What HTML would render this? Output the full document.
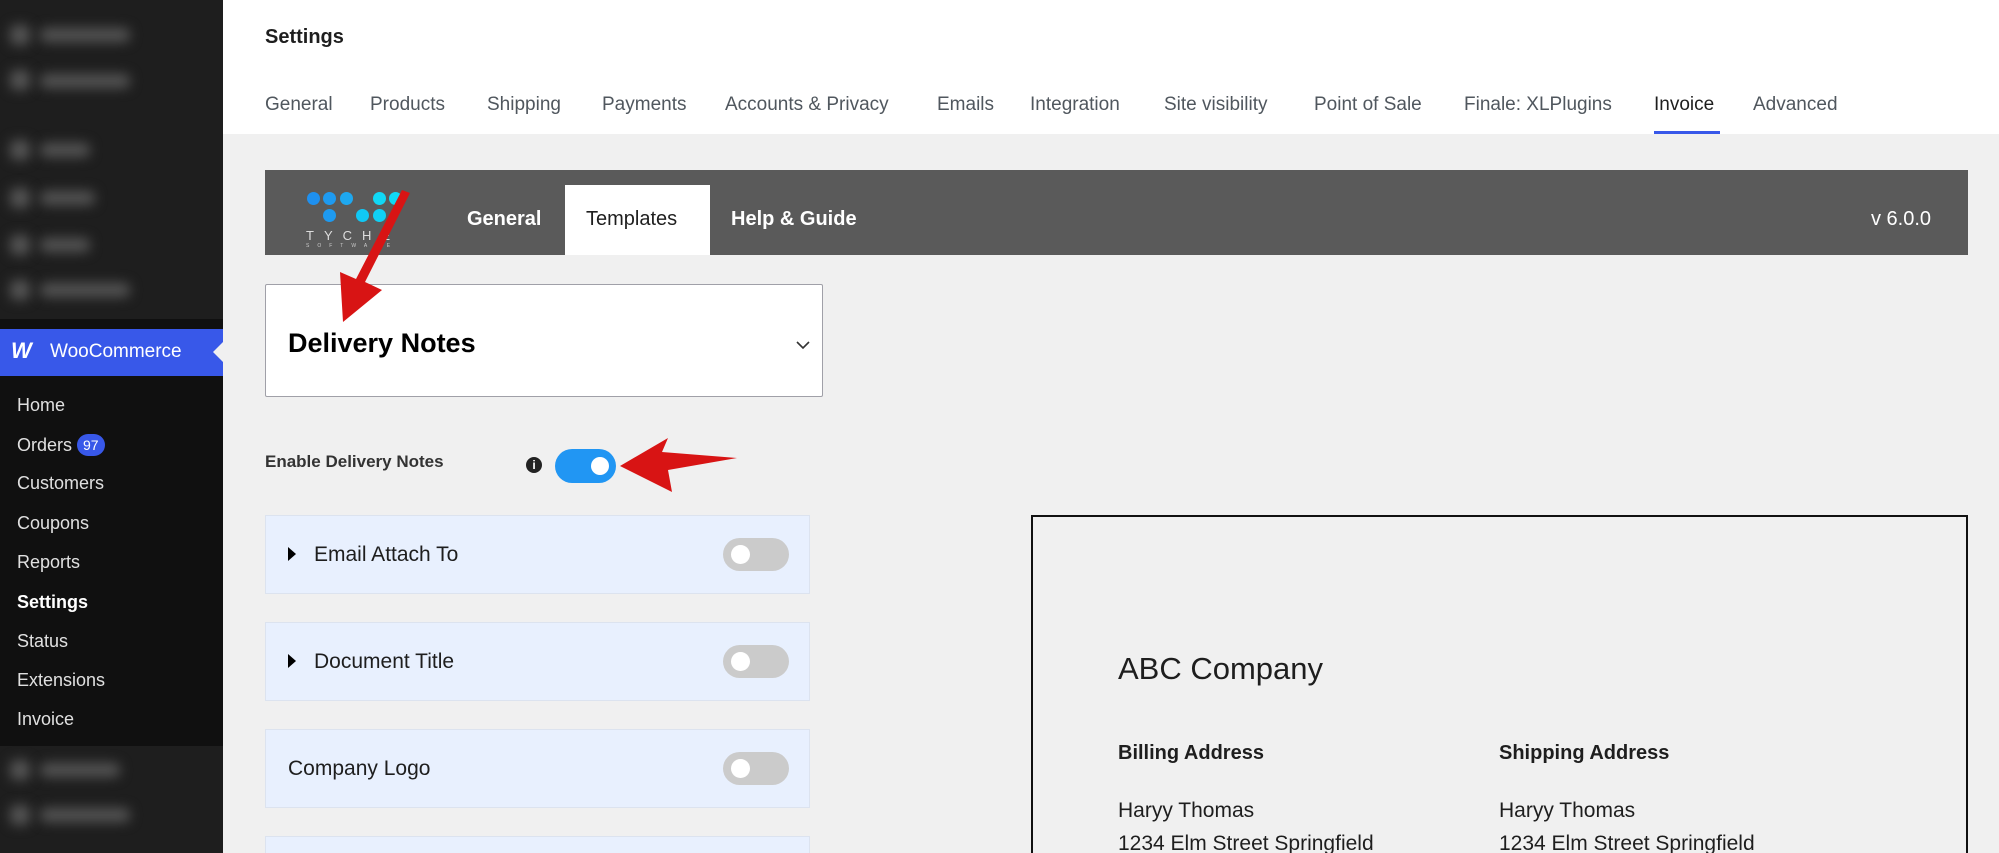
<!DOCTYPE html>
<html><head><meta charset="utf-8">
<style>
*{margin:0;padding:0;box-sizing:border-box}
html,body{width:1999px;height:853px;overflow:hidden}
body{background:#f0f0f0;font-family:"Liberation Sans",sans-serif}
#wrap{position:relative;width:1999px;height:853px;overflow:hidden;background:#f0f0f0}
.a{position:absolute;white-space:nowrap}
#side{left:0;top:0;width:223px;height:853px;background:#101010}
.blur{position:absolute;left:0;width:223px;background:#1e1e1e}
.bl{position:absolute;background:#555;filter:blur(6px);border-radius:6px}
.mi{position:absolute;left:17px;color:#e0e0e0;font-size:18px}
#hdr{left:223px;top:0;width:1776px;height:134px;background:#fff}
.tab{position:absolute;top:94px;font-size:19px;color:#50575e}
.panel{position:absolute;left:265px;width:545px;height:79px;background:#e8f0fe;border:1px solid #dce3ef}
.panel .t{position:absolute;left:48px;top:27px;font-size:21px;color:#1e1e1e}
.panel .c{position:absolute;left:22px;top:31px;width:0;height:0;border-top:7px solid transparent;border-bottom:7px solid transparent;border-left:8px solid #000}
.tg{position:absolute;left:457px;top:22px;width:66px;height:33px;border-radius:17px;background:#cbcbcb}
.tg:after{content:"";position:absolute;left:8px;top:7px;width:19px;height:19px;border-radius:50%;background:#fff}
.dot{position:absolute;width:13px;height:13px;border-radius:50%}
</style></head><body><div id="wrap">
<div class="a" id="side">
 <div class="blur" style="top:0;height:319px"></div>
 <div class="bl" style="left:10px;top:25px;width:20px;height:20px"></div><div class="bl" style="left:40px;top:28px;width:90px;height:14px"></div>
 <div class="bl" style="left:10px;top:70px;width:20px;height:20px"></div><div class="bl" style="left:40px;top:74px;width:90px;height:14px"></div>
 <div class="bl" style="left:10px;top:140px;width:20px;height:20px"></div><div class="bl" style="left:40px;top:143px;width:50px;height:14px"></div>
 <div class="bl" style="left:10px;top:188px;width:20px;height:20px"></div><div class="bl" style="left:40px;top:191px;width:55px;height:14px"></div>
 <div class="bl" style="left:10px;top:235px;width:20px;height:20px"></div><div class="bl" style="left:40px;top:238px;width:50px;height:14px"></div>
 <div class="bl" style="left:10px;top:280px;width:20px;height:20px"></div><div class="bl" style="left:40px;top:283px;width:90px;height:14px"></div>
 <div class="a" style="left:0;top:329px;width:223px;height:47px;background:#3858e9"></div>
 <div class="a" style="left:213px;top:342px;width:0;height:0;border-top:10px solid transparent;border-bottom:10px solid transparent;border-right:10px solid #f0f0f0"></div>
 <div class="a" style="left:11px;top:338px;color:#fff;font-size:22px;font-weight:bold;font-style:italic">W</div>
 <div class="a" style="left:50px;top:341px;color:#fff;font-size:19px">WooCommerce</div>
 <div class="mi" style="top:395px">Home</div>
 <div class="mi" style="top:434px">Orders <span style="display:inline-block;background:#3858e9;color:#fff;font-size:14px;border-radius:12px;padding:3px 6px;vertical-align:1px">97</span></div>
 <div class="mi" style="top:473px">Customers</div>
 <div class="mi" style="top:513px">Coupons</div>
 <div class="mi" style="top:552px">Reports</div>
 <div class="mi" style="top:592px;color:#fff;font-weight:bold">Settings</div>
 <div class="mi" style="top:631px">Status</div>
 <div class="mi" style="top:670px">Extensions</div>
 <div class="mi" style="top:709px">Invoice</div>
 <div class="blur" style="top:746px;height:107px"></div>
 <div class="bl" style="left:10px;top:760px;width:20px;height:20px"></div><div class="bl" style="left:40px;top:763px;width:80px;height:14px"></div>
 <div class="bl" style="left:10px;top:805px;width:20px;height:20px"></div><div class="bl" style="left:40px;top:808px;width:90px;height:14px"></div>
</div>
<div class="a" id="hdr">
 <div class="a" style="left:42px;top:26px;font-size:20px;font-weight:bold;color:#1e1e1e">Settings</div>
</div>
<div class="tab" style="left:265px">General</div>
<div class="tab" style="left:370px">Products</div>
<div class="tab" style="left:487px">Shipping</div>
<div class="tab" style="left:602px">Payments</div>
<div class="tab" style="left:725px">Accounts &amp; Privacy</div>
<div class="tab" style="left:937px">Emails</div>
<div class="tab" style="left:1030px">Integration</div>
<div class="tab" style="left:1164px">Site visibility</div>
<div class="tab" style="left:1314px">Point of Sale</div>
<div class="tab" style="left:1464px">Finale: XLPlugins</div>
<div class="tab" style="left:1654px;color:#1e1e1e">Invoice</div>
<div class="tab" style="left:1753px">Advanced</div>
<div class="a" style="left:1654px;top:131px;width:66px;height:3px;background:#3858e9"></div>

<div class="a" style="left:265px;top:170px;width:1703px;height:85px;background:#5a5a5a"></div>
<div class="a" style="left:565px;top:185px;width:145px;height:70px;background:#fff"></div>
<div class="a" style="left:467px;top:208px;font-size:20px;font-weight:bold;color:#fff">General</div>
<div class="a" style="left:586px;top:208px;font-size:20px;color:#1e1e1e">Templates</div>
<div class="a" style="left:731px;top:208px;font-size:20px;font-weight:bold;color:#fff">Help &amp; Guide</div>
<div class="a" style="left:1871px;top:208px;font-size:20px;color:#fff">v 6.0.0</div>
<div class="dot" style="left:307px;top:192px;background:#1e90f0"></div>
<div class="dot" style="left:323px;top:192px;background:#1e9af0"></div>
<div class="dot" style="left:340px;top:192px;background:#1ea8f0"></div>
<div class="dot" style="left:373px;top:192px;background:#10d8f5"></div>
<div class="dot" style="left:389px;top:192px;background:#10d8f5"></div>
<div class="dot" style="left:323px;top:209px;background:#1e9af0"></div>
<div class="dot" style="left:356px;top:209px;background:#10c8f5"></div>
<div class="dot" style="left:373px;top:209px;background:#10d0f5"></div>
<div class="a" style="left:306px;top:228px;font-size:13px;color:#ddd;letter-spacing:10px">TYCHE</div>
<div class="a" style="left:306px;top:243px;font-size:5px;color:#ccc;letter-spacing:8px">SOFTWARE</div>

<div class="a" style="left:265px;top:284px;width:558px;height:113px;background:#fff;border:1px solid #a0a0a8;border-radius:2px"></div>
<div class="a" style="left:288px;top:328px;font-size:27px;font-weight:bold;color:#000">Delivery Notes</div>
<svg class="a" style="left:796px;top:340px" width="14" height="10"><path d="M1 2 L7 8 L13 2" stroke="#333" stroke-width="1.6" fill="none"/></svg>

<div class="a" style="left:265px;top:452px;font-size:17px;font-weight:bold;color:#333">Enable Delivery Notes</div>
<div class="a" style="left:526px;top:457px;width:16px;height:16px;border-radius:50%;background:#222;color:#fff;font-size:12px;font-weight:bold;text-align:center;line-height:16px">i</div>
<div class="a" style="left:555px;top:449px;width:61px;height:34px;border-radius:17px;background:#2196f3"></div>
<div class="a" style="left:591px;top:457px;width:18px;height:18px;border-radius:50%;background:#fff"></div>

<div class="panel" style="top:515px"><div class="c"></div><div class="t">Email Attach To</div><div class="tg"></div></div>
<div class="panel" style="top:622px"><div class="c"></div><div class="t">Document Title</div><div class="tg"></div></div>
<div class="panel" style="top:729px"><div class="t" style="left:22px">Company Logo</div><div class="tg"></div></div>
<div class="panel" style="top:836px;height:17px;border-bottom:none"></div>

<div class="a" style="left:1031px;top:515px;width:937px;height:338px;border:2px solid #111;border-bottom:none"></div>
<div class="a" style="left:1118px;top:651px;font-size:31px;color:#1e1e1e">ABC Company</div>
<div class="a" style="left:1118px;top:742px;font-size:20px;font-weight:bold;color:#1e1e1e">Billing Address</div>
<div class="a" style="left:1499px;top:742px;font-size:20px;font-weight:bold;color:#1e1e1e">Shipping Address</div>
<div class="a" style="left:1118px;top:794px;font-size:21px;color:#1e1e1e;line-height:33px">Haryy Thomas<br>1234 Elm Street Springfield</div>
<div class="a" style="left:1499px;top:794px;font-size:21px;color:#1e1e1e;line-height:33px">Haryy Thomas<br>1234 Elm Street Springfield</div>

<svg class="a" style="left:0;top:0" width="1999" height="853">
 <path d="M410 193 L365 282 L382 290 L343 322 L340 272 L356 279 L402 190 Z" fill="#d81414"/>
 <path d="M620 466 L668 438 L662 452 L737 458 L668 470 L672 492 Z" fill="#d81414"/>
</svg>
</div></body></html>
